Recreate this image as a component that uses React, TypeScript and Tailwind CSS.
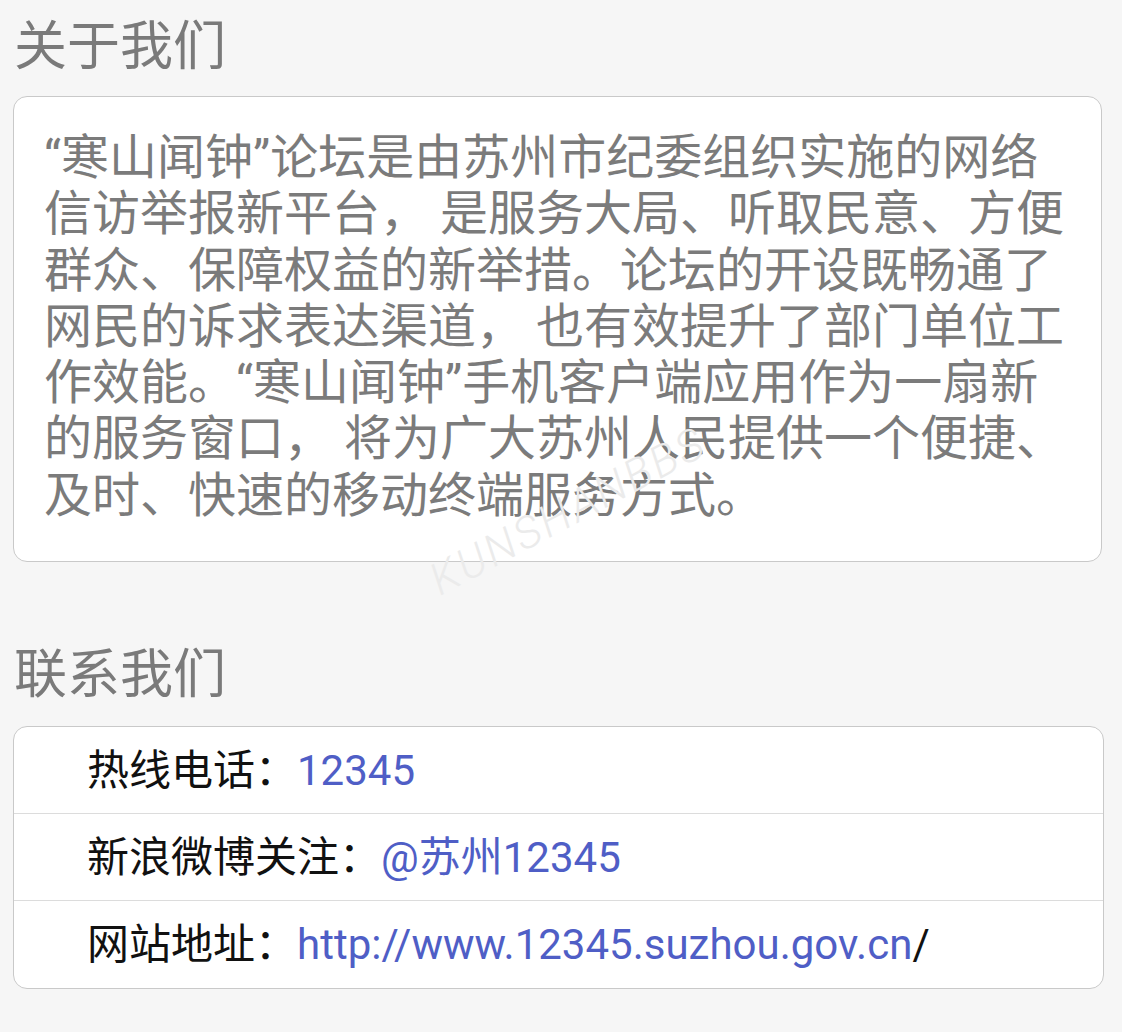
const contacts = [
    { label: "热线电话：", value: "12345", tail: "" },
    { label: "新浪微博关注：", value: "@苏州12345", tail: "" },
    { label: "网站地址：", value: "http://www.12345.suzhou.gov.cn", tail: "/" },
];

const About = () => {
    return (
        <div
            className="relative min-h-[1032px] w-[1122px] bg-[#f6f6f6] overflow-hidden"
            style={{ fontFamily: 'Roboto, "Noto Sans CJK SC", sans-serif' }}
        >
            <h2 className="pl-[14px] pt-[17px] h-[96px] text-[53px] leading-[60px] text-[#7a7a7a]">
                关于我们
            </h2>
            <div className="mx-[13px] w-[1089px] h-[466px] rounded-[14px] border border-[#c9c9c9] bg-white pl-[30px] pr-[31px] pt-[33px]">
                <p className="text-[48px] leading-[56.3px] text-[#7b7b7b]">
                    “寒山闻钟”论坛是由苏州市纪委组织实施的网络信访举报新平台， 是服务大局、听取民意、方便群众、保障权益的新举措。论坛的开设既畅通了网民的诉求表达渠道， 也有效提升了部门单位工作效能。“寒山闻钟”手机客户端应用作为一扇新的服务窗口， 将为广大苏州人民提供一个便捷、及时、快速的移动终端服务方式。
                </p>
            </div>

            <h2 className="pl-[14px] pt-[83px] h-[164px] text-[53px] leading-[60px] text-[#7a7a7a]">
                联系我们
            </h2>
            <div className="mx-[13px] w-[1091px] rounded-[14px] border border-[#c9c9c9] bg-white">
                {contacts.map((item, index) => (
                    <div
                        key={item.label}
                        className={
                            index < contacts.length - 1
                                ? "flex items-center h-[87px] pl-[73px] border-b border-[#dcdcdc]"
                                : "flex items-center h-[87px] pl-[73px]"
                        }
                    >
                        <span className="text-[42px] text-[#111]">{item.label}</span>
                        <span className="text-[42px] text-[#4f5ec6]">{item.value}</span>
                        <span className="text-[42px] text-[#111]">{item.tail}</span>
                    </div>
                ))}
            </div>

            <div className="absolute left-[415px] top-[478px] -rotate-[28deg] text-[44px] tracking-[3px] italic font-light text-[#ebebeb] pointer-events-none select-none">
                KUNSHANBBS
            </div>
        </div>
    );
};

export default function App() {
    return <About />;
}
